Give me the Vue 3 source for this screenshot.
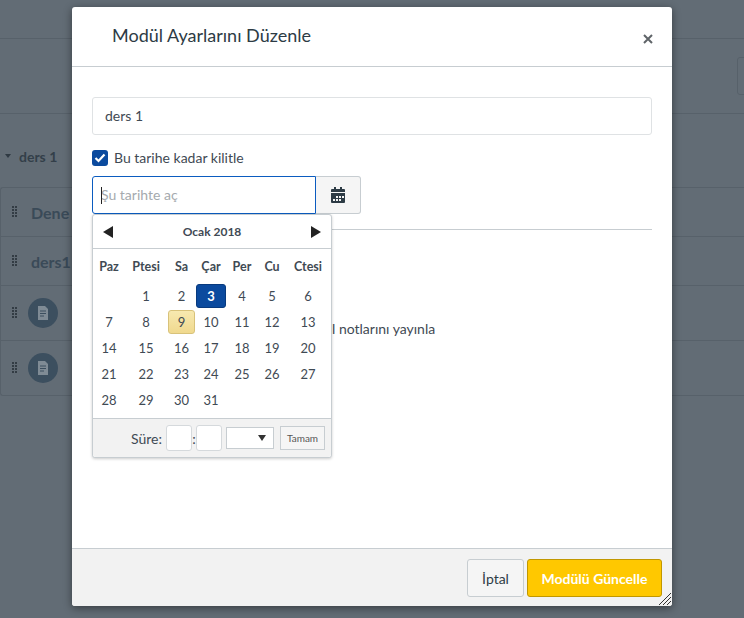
<script setup>
const weekDays = ['Paz', 'Ptesi', 'Sa', 'Çar', 'Per', 'Cu', 'Ctesi']
const days = ['', ...Array.from({ length: 31 }, (_, i) => i + 1)]
const bgRows = [
  { label: 'Dene', tall: false },
  { label: 'ders1', tall: false },
  { label: '', tall: true },
  { label: '', tall: true }
]
</script>

<template>
  <div class="page">
    <div class="top-bar"></div>
    <div class="tool-bar"><span class="tool-btn"></span></div>
    <div class="module-title"><span class="caret"></span>ders 1</div>
    <div class="module-list">
      <div v-for="(row, i) in bgRows" :key="i" class="module-row" :class="{ tall: row.tall }">
        <svg class="grip" width="7" height="13" viewBox="0 0 7 13">
          <g fill="#333c44">
            <rect x="0" y="0" width="2" height="2" /><rect x="3" y="0" width="2" height="2" />
            <rect x="0" y="3" width="2" height="2" /><rect x="3" y="3" width="2" height="2" />
            <rect x="0" y="6" width="2" height="2" /><rect x="3" y="6" width="2" height="2" />
            <rect x="0" y="9" width="2" height="2" /><rect x="3" y="9" width="2" height="2" />
          </g>
        </svg>
        <span v-if="row.label" class="row-label">{{ row.label }}</span>
        <span v-else class="doc-badge">
          <svg width="12" height="14" viewBox="0 0 12 14">
            <path d="M1 0h7l3 3v11H1z" fill="#7f8b95" />
            <path d="M3 5h6M3 7.5h6M3 10h4" stroke="#3c4f5f" stroke-width="1" />
          </svg>
        </span>
      </div>
    </div>

    <div class="modal">
      <header class="modal-head">
        <h2>Modül Ayarlarını Düzenle</h2>
        <svg class="close" width="10" height="10" viewBox="0 0 10 10">
          <path d="M1 1l8 8M9 1l-8 8" stroke="#5f6468" stroke-width="2" />
        </svg>
      </header>

      <div class="modal-body">
        <div class="text-input">ders 1</div>

        <label class="check-row">
          <span class="check">
            <svg width="12" height="10" viewBox="0 0 12 10">
              <path d="M1.5 5l3 3 6-6.5" fill="none" stroke="#fff" stroke-width="2.2" />
            </svg>
          </span>
          Bu tarihe kadar kilitle
        </label>

        <div class="date-row">
          <div class="date-input"><i class="cursor"></i>Şu tarihte aç</div>
          <div class="date-btn">
            <svg width="14" height="16" viewBox="0 0 14 16">
              <path d="M0 3a1 1 0 0 1 1-1h2V0h2v2h4V0h2v2h2a1 1 0 0 1 1 1v2H0z" fill="#2d3b45" />
              <path d="M0 6h14v9a1 1 0 0 1-1 1H1a1 1 0 0 1-1-1z" fill="#2d3b45" />
              <g fill="#f5f5f5">
                <rect x="5" y="9" width="2" height="2" /><rect x="8" y="9" width="2" height="2" />
                <rect x="11" y="9" width="2" height="2" /><rect x="2" y="12" width="2" height="2" />
                <rect x="5" y="12" width="2" height="2" /><rect x="8" y="12" width="2" height="2" />
              </g>
            </svg>
          </div>
        </div>

        <hr class="rule" />
        <div class="behind-text">l notlarını yayınla</div>

        <div class="picker">
          <div class="picker-head">
            <span class="arrow left"></span>
            <span class="month">Ocak 2018</span>
            <span class="arrow right"></span>
          </div>
          <div class="grid week">
            <span v-for="d in weekDays" :key="d">{{ d }}</span>
          </div>
          <div class="grid month-days">
            <span
              v-for="(d, i) in days"
              :key="i"
              class="day"
              :class="{ active: d === 3, today: d === 9 }"
            >{{ d }}</span>
          </div>
          <div class="picker-foot">
            <span class="time-label">Süre:</span>
            <span class="time-box"></span>
            <span class="colon">:</span>
            <span class="time-box"></span>
            <span class="ampm"><i></i></span>
            <span class="done">Tamam</span>
          </div>
        </div>
      </div>

      <footer class="modal-foot">
        <button type="button" class="btn">İptal</button>
        <button type="button" class="btn primary">Modülü Güncelle</button>
        <svg class="resize" width="12" height="12" viewBox="0 0 12 12">
          <path d="M0 12L12 0M4 12l8-8M8 12l4-4" stroke="#333" stroke-width="1" />
        </svg>
      </footer>
    </div>
  </div>
</template>

<style>
html, body {
  margin: 0;
  background: #626c75;
}
</style>

<style scoped>
.page {
  position: relative;
  width: 744px;
  height: 618px;
  overflow: hidden;
  background: #626c75;
  font-family: Lato, "Open Sans", sans-serif;
  color: #2d3b45;
}
.top-bar {
  height: 38px;
  border-bottom: 1px solid #57616a;
}
.tool-bar {
  height: 74px;
  border-bottom: 1px solid #57616a;
  display: flex;
  justify-content: flex-end;
  align-items: center;
  padding-right: 4px;
}
.tool-btn {
  width: 40px;
  height: 36px;
  border: 1px solid #57616a;
  border-radius: 3px;
  margin-right: -40px;
  margin-left: 0;
  transform: translateX(-1px);
}
.module-title {
  display: flex;
  align-items: center;
  margin-top: 32px;
  height: 20px;
  padding-left: 5px;
  font-size: 14px;
  font-weight: 700;
  color: #333f49;
}
.caret {
  width: 0;
  height: 0;
  border: 3.5px solid transparent;
  border-top: 4px solid #2f3a43;
  border-bottom: 0;
  margin-right: 8px;
}
.module-list {
  margin-top: 21px;
  border: 1px solid #57616a;
  border-right: 0;
  border-radius: 3px 0 0 3px;
}
.module-row {
  height: 48px;
  display: flex;
  align-items: center;
  gap: 12px;
  padding-left: 11px;
  border-bottom: 1px solid #57616a;
}
.module-row.tall {
  height: 54px;
  gap: 9px;
}
.module-row:last-child {
  border-bottom: 0;
}
.row-label {
  font-size: 16px;
  font-weight: 700;
  color: #3a4a58;
}
.doc-badge {
  width: 30px;
  height: 30px;
  border-radius: 50%;
  background: #3c4f5f;
  display: flex;
  align-items: center;
  justify-content: center;
}

.modal {
  position: absolute;
  left: 72px;
  top: 7px;
  width: 600px;
  height: 599px;
  background: #fff;
  border-radius: 3px;
  box-shadow: 0 2px 8px rgba(0, 0, 0, 0.45);
  display: flex;
  flex-direction: column;
}
.modal-head {
  height: 59px;
  flex: none;
  border-bottom: 1px solid #c7cdd1;
  display: flex;
  align-items: center;
  justify-content: space-between;
  padding: 0 19px 0 40px;
}
.modal-head h2 {
  margin: 0 0 4px;
  font-size: 18px;
  font-weight: 400;
  color: #2d3b45;
}
.close {
  margin-top: 5px;
}
.modal-body {
  position: relative;
  flex: 1;
  padding: 30px 20px 0;
}
.text-input {
  height: 36px;
  box-sizing: content-box;
  border: 1px solid #dfe2e4;
  border-radius: 3px;
  padding: 0 12px;
  line-height: 36px;
  font-size: 14px;
  color: #3f4a54;
}
.check-row {
  display: flex;
  align-items: center;
  gap: 6px;
  margin-top: 14px;
  height: 17px;
  font-size: 14px;
  color: #3f4a54;
}
.check {
  width: 16px;
  height: 16px;
  border-radius: 3px;
  background: #0b4a9e;
  display: flex;
  align-items: center;
  justify-content: center;
}
.date-row {
  display: flex;
  margin-top: 10px;
  height: 38px;
}
.date-input {
  width: 224px;
  box-sizing: border-box;
  border: 1px solid #0b5cc0;
  border-radius: 3px 0 0 3px;
  padding-left: 8px;
  line-height: 36px;
  font-size: 14px;
  color: #a5aaae;
  position: relative;
}
.cursor {
  position: absolute;
  left: 8px;
  top: 10px;
  width: 1px;
  height: 17px;
  background: #222;
}
.date-btn {
  width: 45px;
  box-sizing: border-box;
  border: 1px solid #c7cdd1;
  border-left: 0;
  border-radius: 0 3px 3px 0;
  background: #f5f5f5;
  display: flex;
  align-items: center;
  justify-content: center;
}
.rule {
  margin: 15px 0 0;
  border: 0;
  border-top: 1px solid #c7cdd1;
}
.behind-text {
  margin-top: 90px;
  margin-left: 240px;
  font-size: 14px;
  line-height: 17px;
  color: #3f4a54;
}

.picker {
  position: absolute;
  left: 20px;
  top: 147px;
  width: 240px;
  height: 244px;
  box-sizing: border-box;
  background: #fff;
  border: 1px solid #c7cdd1;
  border-radius: 3px;
  box-shadow: 0 1px 3px rgba(0, 0, 0, 0.2);
  display: flex;
  flex-direction: column;
}
.picker-head {
  height: 33px;
  flex: none;
  border-bottom: 1px solid #c7cdd1;
  display: flex;
  align-items: center;
  justify-content: space-between;
  padding: 0 10px;
}
.month {
  font-size: 12px;
  font-weight: 700;
  color: #3f4a54;
}
.arrow {
  width: 0;
  height: 0;
  border-top: 6px solid transparent;
  border-bottom: 6px solid transparent;
}
.arrow.left {
  border-right: 10px solid #222;
}
.arrow.right {
  border-left: 10px solid #222;
}
.grid {
  display: grid;
  grid-template-columns: 32px 42px 29px 30px 32px 28px 44px;
  text-align: center;
  font-size: 13px;
  color: #3f4a54;
}
.week {
  height: 34px;
  align-items: center;
  font-weight: 700;
  font-size: 12.5px;
}
.month-days {
  grid-auto-rows: 26px;
  flex: 1;
}
.day {
  display: flex;
  align-items: center;
  justify-content: center;
  margin: 1px 0;
  border-radius: 3px;
  box-sizing: border-box;
}
.day.active {
  background: #0b4a9e;
  border: 1px solid #083a7e;
  color: #fff;
  font-weight: 700;
}
.day.today {
  background: linear-gradient(#f7e9b0, #f0d98e);
  border: 1px solid #d8c27a;
  margin: 1px 1px 1px 1px;
}
.picker-foot {
  height: 39px;
  flex: none;
  box-sizing: border-box;
  border-top: 1px solid #c7cdd1;
  background: #f2f2f2;
  border-radius: 0 0 3px 3px;
  display: flex;
  align-items: center;
  justify-content: flex-end;
  padding-right: 6px;
  font-size: 14px;
  color: #3f4a54;
}
.time-label {
  margin-right: 4px;
}
.time-box {
  width: 26px;
  height: 26px;
  box-sizing: border-box;
  border: 1px solid #d5d9dc;
  border-radius: 3px;
  background: #fff;
}
.colon {
  width: 4px;
  text-align: center;
}
.ampm {
  width: 48px;
  height: 22px;
  box-sizing: border-box;
  margin: 0 6px 0 4px;
  border: 1px solid #c7cdd1;
  background: #fff;
  position: relative;
}
.ampm i {
  position: absolute;
  right: 7px;
  top: 7px;
  width: 0;
  height: 0;
  border: 4px solid transparent;
  border-top: 6px solid #333;
  border-bottom: 0;
}
.done {
  width: 45px;
  height: 24px;
  box-sizing: border-box;
  border: 1px solid #c7cdd1;
  background: #f5f5f5;
  text-align: center;
  line-height: 22px;
  font-size: 10px;
  color: #555;
}

.modal-foot {
  position: relative;
  height: 58px;
  flex: none;
  box-sizing: border-box;
  border-top: 1px solid #c7cdd1;
  background: #f2f2f2;
  border-radius: 0 0 3px 3px;
  display: flex;
  align-items: flex-start;
  justify-content: flex-end;
  gap: 3px;
  padding: 10px 10px 0 0;
}
.btn {
  height: 38px;
  width: 57px;
  padding: 0;
  border: 1px solid #c7cdd1;
  border-radius: 3px;
  background: #f5f5f5;
  font-family: inherit;
  font-size: 14px;
  color: #2d3b45;
}
.btn.primary {
  width: 135px;
  background: #ffc800;
  border-color: #c19700;
  color: #fff;
  font-weight: 700;
}
.resize {
  position: absolute;
  right: 1px;
  bottom: 1px;
}
</style>
